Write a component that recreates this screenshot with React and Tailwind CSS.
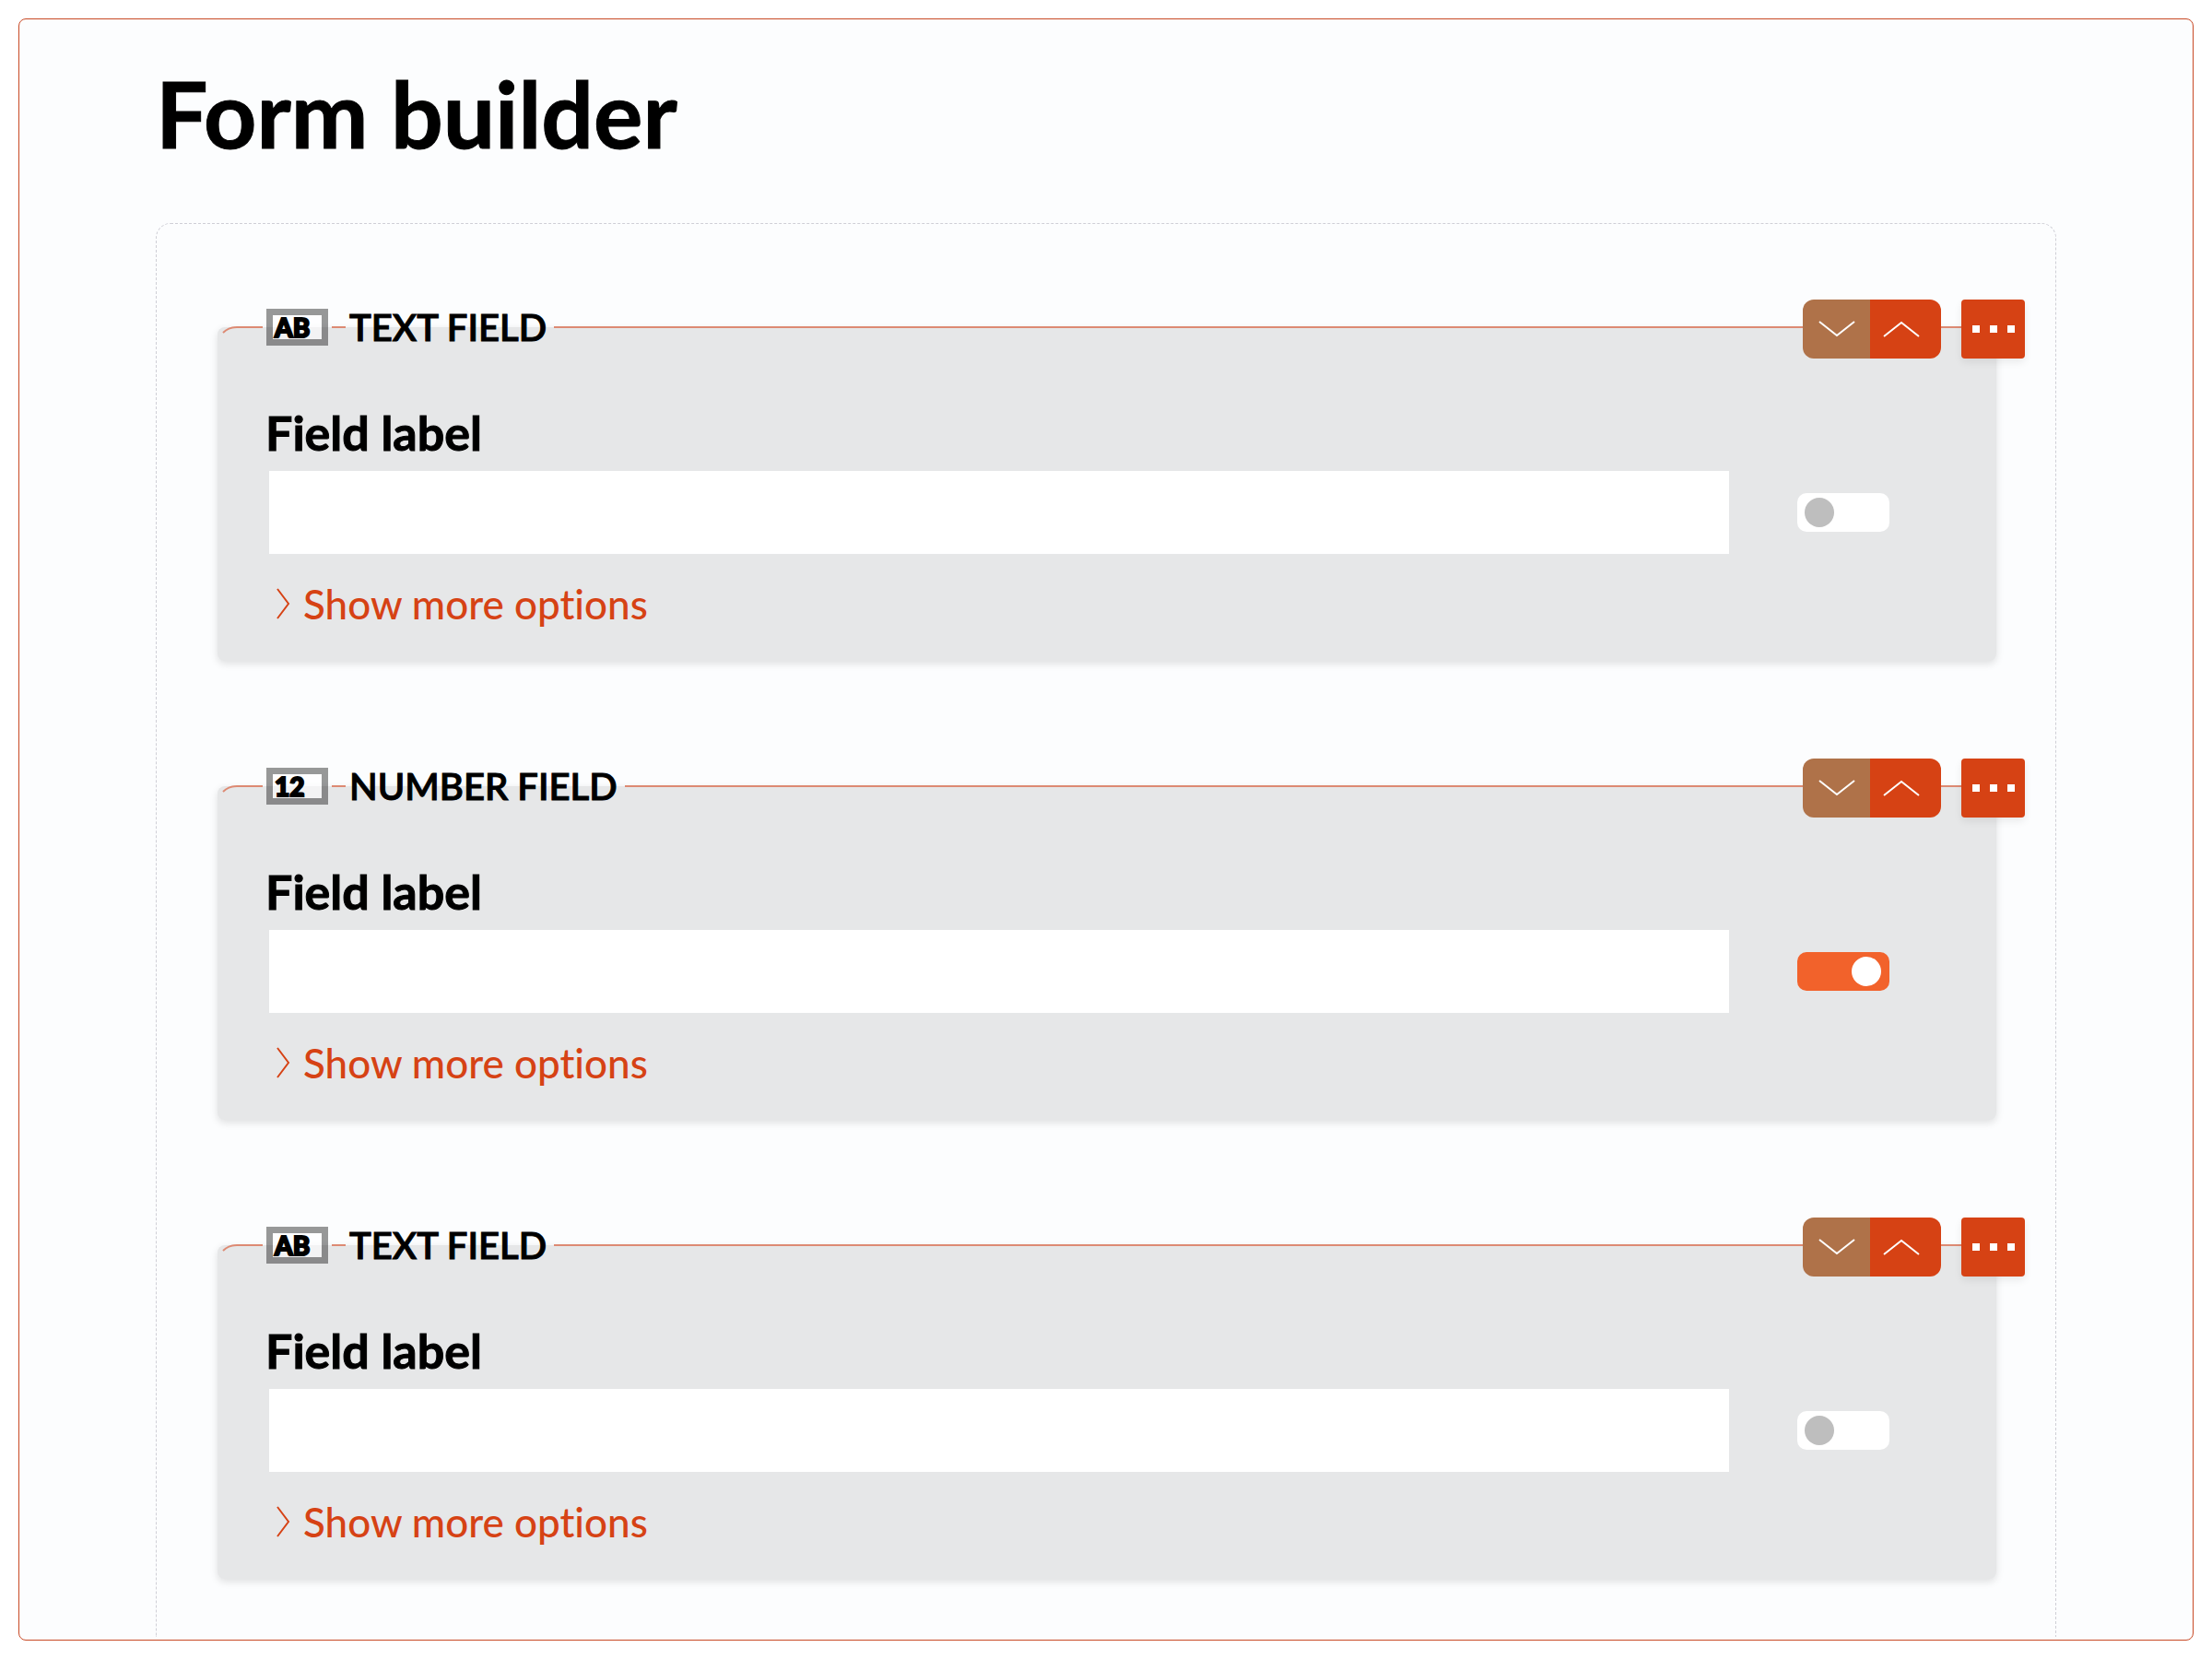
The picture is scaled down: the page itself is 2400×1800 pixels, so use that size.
import React, { useState } from "react";

const initialFields = [
  { id: "field-1", badge: "AB", type: "TEXT FIELD", required: false },
  { id: "field-2", badge: "12", type: "NUMBER FIELD", required: true },
  { id: "field-3", badge: "AB", type: "TEXT FIELD", required: false },
];

const Line = ({ className }) => <span className={`h-0.5 bg-[#dd8a73] ${className}`}></span>;

const FieldHeader = ({ badge, type }) => (
  <div className="-mt-8 -mr-[31px] flex h-16 items-center gap-1 pl-1.5">
    {/* Rounded start of the border line */}
    <svg width="43" height="2" className="shrink-0 overflow-visible" fill="none" stroke="#dd8a73" strokeWidth="2">
      <path d="M0 7C4 3 8 1 15 1H43" />
    </svg>
    <span className="flex h-10 w-[67px] shrink-0 items-center border-[7px] border-black/40 bg-white/50 bg-clip-padding pl-0.5 text-[28px] leading-none font-black [-webkit-text-stroke:2px_black]">
      {badge}
    </span>
    <Line className="w-[15px]" />
    <h2 className="text-[40px] leading-none font-semibold [-webkit-text-stroke:1px_black]">{type}</h2>
    <div className="ml-1 flex flex-1 items-center">
      <Line className="flex-1" />
      <div className="pt-1">
        <div className="flex h-16 overflow-hidden rounded-xl">
          <button aria-label="Move down" className="flex w-[73px] items-center justify-center bg-[#af7249]">
            <svg width="40" height="18" fill="none" stroke="white" strokeWidth="2">
              <path d="M1 1L20 16L39 1" />
            </svg>
          </button>
          <button aria-label="Move up" className="flex w-[77px] items-center bg-[#d64214] pl-[14px]">
            <svg width="40" height="18" fill="none" stroke="white" strokeWidth="2">
              <path d="M1 17L20 2L39 17" />
            </svg>
          </button>
        </div>
      </div>
      <Line className="w-[22px]" />
      <div className="pt-1">
        <button
          aria-label="More actions"
          className="flex h-16 w-[69px] items-center justify-center gap-[11px] rounded bg-[#d64214] shadow-[0_4px_8px_rgba(0,0,0,0.08)]"
        >
          <span className="size-2 bg-white"></span>
          <span className="size-2 bg-white"></span>
          <span className="size-2 bg-white"></span>
        </button>
      </div>
    </div>
  </div>
);

const FieldCard = ({ field, onToggle }) => {
  const [label, setLabel] = useState("");

  return (
    <section className="rounded-lg bg-[#e6e7e8] pb-[38px] shadow-[0_3px_8px_rgba(0,0,0,0.12)]">
      <FieldHeader badge={field.badge} type={field.type} />

      <div className="pt-[52px] pr-[116px] pl-[52px]">
        <label htmlFor={field.id} className="block text-[52px] leading-[60px] font-bold [-webkit-text-stroke:1px_black]">
          Field label
        </label>
        <div className="mt-3 flex items-center gap-[74px] pl-1">
          <input
            id={field.id}
            type="text"
            value={label}
            onChange={(e) => setLabel(e.target.value)}
            className="h-[90px] min-w-0 flex-1 bg-white px-6 text-[40px] outline-none"
          />
          <input
            type="checkbox"
            role="switch"
            aria-label="Required"
            checked={field.required}
            onChange={() => onToggle(field.id)}
            className="h-[42px] w-[100px] shrink-0 appearance-none rounded-[10px] bg-white before:mt-[5px] before:ml-2 before:block before:size-8 before:rounded-full before:bg-[#bebebe] checked:bg-[#f2622b] checked:before:ml-[59px] checked:before:bg-white"
          />
        </div>
        <button className="mt-[30px] flex items-center gap-[14px] pl-3 text-[44px] leading-[48px] font-medium text-[#d64214] [font-variant-ligatures:none]">
          <svg width="15" height="34" fill="none" stroke="currentColor" strokeWidth="2">
            <path d="M1 1L13 17L1 33" />
          </svg>
          Show more options
        </button>
      </div>
    </section>
  );
};

const App = () => {
  const [fields, setFields] = useState(initialFields);

  const handleToggle = (id) => {
    setFields(fields.map((f) => (f.id === id ? { ...f, required: !f.required } : f)));
  };

  return (
    <div className="flex min-h-screen flex-col bg-white p-5 font-[Lato,sans-serif] text-black">
      <main className="flex flex-1 flex-col rounded-lg border border-[#c94a26] bg-[#fcfdfe] px-[148px] pt-[54px] pb-[3px]">
        <h1 className="text-[100px] leading-[94px] font-bold [-webkit-text-stroke:1px_black]">Form builder</h1>

        <div className="mt-[73px] flex flex-1 flex-col gap-[136px] rounded-t-2xl border border-b-0 border-dashed border-[#cfcfd6] pt-28 pr-16 pl-[66px]">
          {fields.map((field) => (
            <FieldCard key={field.id} field={field} onToggle={handleToggle} />
          ))}
        </div>
      </main>
    </div>
  );
};

export default App;
